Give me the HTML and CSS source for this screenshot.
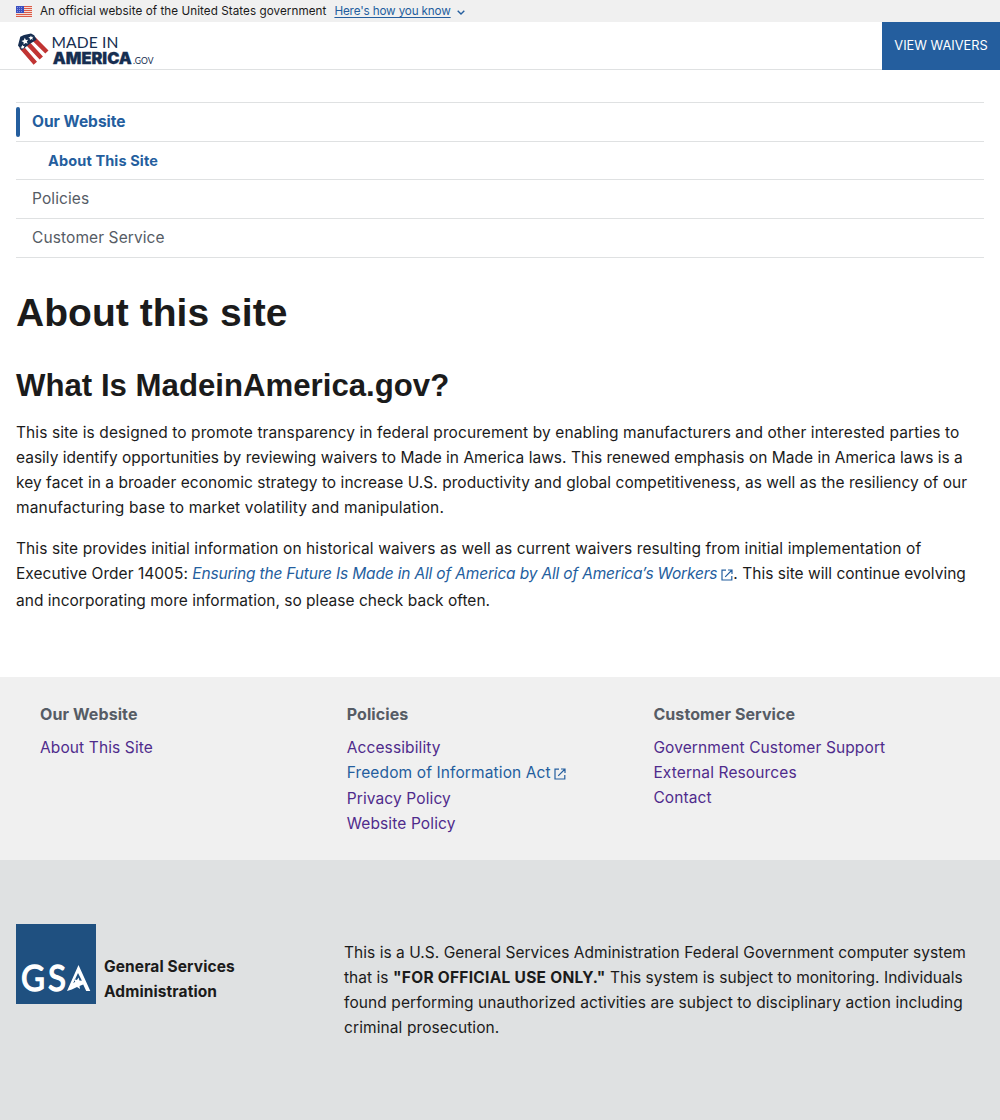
FILE: index.html
```html
<!DOCTYPE html>
<html lang="en">
<head>
<meta charset="utf-8">
<title>About this site | MadeinAmerica.gov</title>
<link rel="stylesheet" href="styles.css">
</head>
<body>
<div class="banner">
  <svg class="flag" width="16" height="11" viewBox="0 0 16 11"><path fill="#f4dcd6" d="M0 0h16v11H0z"/><path stroke="#db5a47" stroke-width="1" d="M0 .5h16M0 2.5h16M0 4.5h16M0 6.5h16M0 8.5h16M0 10.5h16"/><path fill="#3a4fc0" d="M0 0h8v7H0z"/><path stroke="#98a5e5" stroke-width=".8" stroke-dasharray="1 1" d="M1 1.5h6M1 3.5h6M1 5.5h6"/></svg>
  <span class="official">An official website of the United States government</span>
  <a class="how" href="#">Here's how you know</a>
  <svg class="chevron" width="8" height="5" viewBox="0 0 8 5"><path d="M.7.8 4 4 7.3.8" fill="none" stroke="#245e9e" stroke-width="1.4"/></svg>
</div>
<header class="header">
  <svg class="logo" width="137" height="34" viewBox="17 33 137 34">
    <path stroke="#c13433" stroke-width="4.500" d="M33.800 38.800 46.900 52M27.700 43.400 41.300 58M21.200 47 35.300 63.300"/>
    <path fill="#162e51" d="M20.300 36.700 24 35l7-1.400 3.200 1.600 2.400 4.600-6.600 4-8.500 6.400L18 45.500z"/>
    <g fill="#fff"><path d="m24.800 37.800 1.100 2.200 2.400-.3-1.500 1.900 1 2.200-2.300-.8-1.900 1.600v-2.400l-2.200-1.200 2.400-.7z"/><path d="m31 35.400.6 1.500 1.900-.2-1.200 1.400.6 1.600-1.700-.6-1.300 1.100v-1.700l-1.600-.9 1.900-.5z"/><path d="m22.500 44.800.6 1.300 1.500-.1-.9 1.300.6 1.200-1.500-.4-1 1.100-.2-1.500-1.200-.7 1.400-.6z"/></g>
    <text class="made" x="51.500" y="48" textLength="67">MADE IN</text>
    <text class="america" x="52.800" y="64" textLength="79" lengthAdjust="spacingAndGlyphs">AMERICA</text>
    <text class="gov" x="133" y="64" textLength="20.500" lengthAdjust="spacingAndGlyphs">.GOV</text>
  </svg>
  <a class="waivers" href="#">VIEW WAIVERS</a>
</header>
<main class="main">
  <nav class="sidenav">
    <a class="item current" href="#">Our Website</a>
    <a class="item sub" href="#">About This Site</a>
    <a class="item" href="#">Policies</a>
    <a class="item" href="#">Customer Service</a>
  </nav>
  <h1>About this site</h1>
  <h2>What Is MadeinAmerica.gov?</h2>
  <p class="intro">
    <span class="line loose">This site is designed to promote transparency in federal procurement by enabling manufacturers and other interested parties to</span>
    <span class="line">easily identify opportunities by reviewing waivers to Made in America laws. This renewed emphasis on Made in America laws is a</span>
    <span class="line slight">key facet in a broader economic strategy to increase U.S. productivity and global competitiveness, as well as the resiliency of our</span>
    <span class="line looser">manufacturing base to market volatility and manipulation.</span>
  </p>
  <p>
    <span class="line loose">This site provides initial information on historical waivers as well as current waivers resulting from initial implementation of</span>
    <span class="line order"><span class="slight">Executive Order 14005: </span><a class="eo" href="#"><i>Ensuring the Future Is Made in All of America by All of America’s Workers</i><svg class="ext" width="12" height="12" viewBox="0 0 12 12"><path d="M5 1.200H1v9.800h9.800V7M7 1h4v4M11 1 4.200 7.800" fill="none" stroke="currentColor" stroke-width="1.200"/></svg></a>. This site will continue evolving</span>
    <span class="line">and incorporating more information, so please check back often.</span>
  </p>
</main>
<footer>
  <div class="footer-nav">
    <section><h3>Our Website</h3><a href="#">About This Site</a></section>
    <section><h3>Policies</h3><a href="#">Accessibility</a><a class="unvisited" href="#">Freedom of Information Act<svg class="ext" width="12" height="12" viewBox="0 0 12 12"><path d="M5 1.200H1v9.800h9.800V7M7 1h4v4M11 1 4.200 7.800" fill="none" stroke="currentColor" stroke-width="1.200"/></svg></a><a href="#">Privacy Policy</a><a href="#">Website Policy</a></section>
    <section><h3>Customer Service</h3><a href="#">Government Customer Support</a><a href="#">External Resources</a><a href="#">Contact</a></section>
  </div>
  <div class="agency">
    <div class="identity">
      <svg width="80" height="80" viewBox="0 0 80 80"><path fill="#1f5080" d="M0 0h80v80H0z"/><text class="gsa" x="5" y="66.500" textLength="24" lengthAdjust="spacingAndGlyphs">G</text><text class="gsa" x="32" y="66.500" textLength="18" lengthAdjust="spacingAndGlyphs">S</text><path fill="#fff" d="M62.500 41 74.300 67h-4.100l-3-6.600-3.700 1.700.5 3-3-2.200-5.200 2.700-4.800 1.400z"/><path fill="#1f5080" d="m62 49-4.800 10.300 2-1.500-.8-2.500 2.500.6 1.700-2.300.8 2.800 2.500.3z"/></svg>
      <strong>General Services<br>Administration</strong>
    </div>
    <p class="notice">
      <span class="line slight">This is a U.S. General Services Administration Federal Government computer system</span>
      <span class="line slight">that is <b>"FOR OFFICIAL USE ONLY."</b> This system is subject to monitoring. Individuals</span>
      <span class="line loose">found performing unauthorized activities are subject to disciplinary action including</span>
      <span class="line loose">criminal prosecution.</span>
    </p>
  </div>
</footer>
</body>
</html>
```
FILE: styles.css
```css
* { box-sizing: border-box; }
body { margin: 0; font: 15.5px/25px Inter, sans-serif; color: #1b1b1b; background: #fff; }
a { color: #245e9e; text-decoration: none; }
p { margin: 0; }
.line { display: block; white-space: nowrap; letter-spacing: .012px; }
.slight { letter-spacing: .04px; }
.loose { letter-spacing: .1px; }
.looser { letter-spacing: .16px; }

.banner { display: flex; align-items: center; height: 22px; padding: 0 16px; background: #f0f0f0; font-size: 11.7px; line-height: 22px; }
.flag { margin-right: 8px; }
.official { margin-right: 8px; letter-spacing: .052px; }
.how { text-decoration: underline; text-underline-offset: 2px; letter-spacing: -.15px; }
.chevron { margin: 2px 0 0 6px; }

.header { display: flex; justify-content: space-between; height: 48px; border-bottom: 1px solid #dfe1e2; }
.logo { margin: 11px 0 0 17px; }
.logo text { fill: #162e51; }
.made { font: 400 15.6px Lato, sans-serif; }
.america { font: 900 16px Inter, sans-serif; stroke: #162e51; stroke-width: .3px; }
.gov { font: 400 8.5px Lato, sans-serif; }
.waivers { width: 118px; height: 48px; background: #245e9e; color: #fff; text-align: center; font-size: 12.8px; line-height: 47px; }

.main { height: 607px; padding: 32px 16px 0; }
.sidenav { display: grid; grid-template-rows: 39px 38px 39px 39px; height: 156px; border-bottom: 1px solid #dfe1e2; }
.item { display: flex; align-items: center; padding: 0 0 2px 16px; border-top: 1px solid #dfe1e2; color: #565c65; letter-spacing: .1px; }
.current, .sub { color: #245e9e; font-weight: 700; }
.current { letter-spacing: 0; }
.current::before { content: ""; width: 4px; height: 30px; margin: 1px 12px 0 -16px; border-radius: 2px; background: #245e9e; }
.sub { padding: 0 0 0 32px; font-size: 14.5px; letter-spacing: .13px; }
h1, h2 { margin: 0; font-family: "Liberation Sans", Arial, sans-serif; font-weight: 700; white-space: nowrap; }
h1 { margin-top: 31px; font-size: 39px; line-height: 47px; letter-spacing: .04px; }
h2 { margin-top: 31px; font-size: 31.2px; line-height: 37px; }
.intro { margin: 16px 0 16px; }
.eo i { letter-spacing: -.172px; }
.ext { margin-left: 4px; vertical-align: -2px; }
.order { height: 27px; }

.footer-nav { display: grid; grid-template-columns: repeat(3, 306.7px); height: 183px; padding: 25px 40px 0; background: #f0f0f0; }
.footer-nav section { display: flex; flex-direction: column; }
.footer-nav h3 { margin: 0 0 8px; font-size: 16px; line-height: 25px; color: #565c65; letter-spacing: .09px; }
.footer-nav a { color: #4f2b8c; white-space: nowrap; letter-spacing: .12px; }
.footer-nav .unvisited { height: 26px; color: #245e9e; }
.unvisited .ext { margin-left: 3px; }
.agency { display: grid; grid-template-columns: 328px 1fr; height: 260px; padding: 64px 16px 0; background: #dfe1e2; }
.identity { display: flex; gap: 8px; }
.identity strong { padding-top: 30px; letter-spacing: .1px; }
.notice { padding-top: 16px; }
.notice b { letter-spacing: .27px; }
.gsa { font: 400 36px Lato, sans-serif; fill: #fff; stroke: #fff; stroke-width: 1.3px; }
```
